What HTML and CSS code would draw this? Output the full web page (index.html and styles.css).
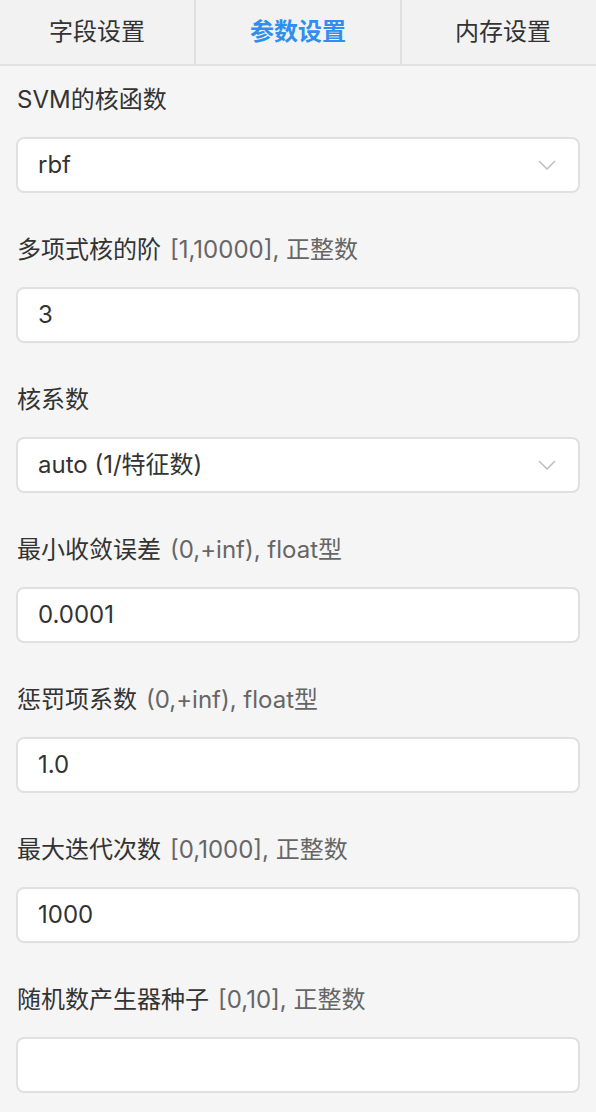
FILE: index.html
```html
<!DOCTYPE html>
<html lang="zh-CN">
<head>
  <meta charset="UTF-8" />
  <meta name="viewport" content="width=device-width, initial-scale=1.0"/>
  <title>参数设置</title>
  <link rel="stylesheet" href="styles.css">
</head>
<body>
  <div class="tab_bar">
    <div class="tab tab_first">字段设置</div>
    <div class="tab tab_active">参数设置</div>
    <div class="tab tab_last">内存设置</div>
  </div>

  <div class="form_container">
    <div class="field">
      <p class="field_label">SVM的核函数</p>
      <div class="select_box">
        <span>rbf</span>
        <svg class="arrow" width="18" height="10" viewBox="0 0 18 10"><path d="M1 1 L9 9 L17 1" fill="none" stroke="#bdbdbd" stroke-width="1.5"/></svg>
      </div>
    </div>

    <div class="field">
      <p class="field_label">多项式核的阶<span class="hint">[1,10000], 正整数</span></p>
      <div class="input_box">3</div>
    </div>

    <div class="field">
      <p class="field_label">核系数</p>
      <div class="select_box">
        <span>auto (1/特征数)</span>
        <svg class="arrow" width="18" height="10" viewBox="0 0 18 10"><path d="M1 1 L9 9 L17 1" fill="none" stroke="#bdbdbd" stroke-width="1.5"/></svg>
      </div>
    </div>

    <div class="field">
      <p class="field_label">最小收敛误差<span class="hint">(0,+inf), float型</span></p>
      <div class="input_box">0.0001</div>
    </div>

    <div class="field">
      <p class="field_label">惩罚项系数<span class="hint">(0,+inf), float型</span></p>
      <div class="input_box">1.0</div>
    </div>

    <div class="field">
      <p class="field_label">最大迭代次数<span class="hint">[0,1000], 正整数</span></p>
      <div class="input_box">1000</div>
    </div>

    <div class="field">
      <p class="field_label">随机数产生器种子<span class="hint">[0,10], 正整数</span></p>
      <div class="input_box"></div>
    </div>
  </div>
</body>
</html>
```

FILE: styles.css
```css
body {
  margin: 0;
  font-family: Inter, "Noto Sans CJK SC", sans-serif;
  background-color: #f5f5f5;
  color: #333;
}

.tab_bar {
  display: flex;
  height: 64px;
  background-color: #f2f2f2;
  border-bottom: 2px solid #e2e2e2;
}

.tab {
  width: 204px;
  font-size: 24px;
  line-height: 64px;
  text-align: center;
  color: #333;
  border-right: 2px solid #e0e0e0;
}

.tab_first {
  width: 194px;
}

.tab_last {
  flex: 1;
  border-right: none;
  padding-left: 8px;
}

.tab_active {
  color: #2f8ff0;
  font-weight: bold;
}

.form_container {
  padding: 16px 16px 0 16px;
}

.field {
  margin-bottom: 39px;
}

.field_label {
  margin: 0 0 19px 1px;
  font-size: 24px;
  line-height: 36px;
}

.hint {
  margin-left: 9px;
  color: #666;
}

.input_box,
.select_box {
  box-sizing: border-box;
  height: 56px;
  width: 564px;
  padding: 0 22px 0 20px;
  background-color: #fff;
  border: 2px solid #e0e0e0;
  border-radius: 8px;
  font-size: 24px;
  line-height: 52px;
  color: #333;
}

.select_box {
  display: flex;
  justify-content: space-between;
  align-items: center;
}

.arrow {
  display: block;
}
```
